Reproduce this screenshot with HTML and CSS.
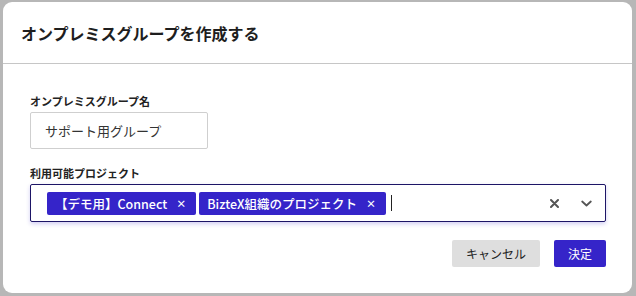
FILE: index.html
```html
<!DOCTYPE html>
<html lang="ja">
<head>
    <meta charset="UTF-8">
    <meta name="viewport" content="width=device-width, initial-scale=1.0">
    <title>オンプレミスグループを作成する</title>
    <link rel="stylesheet" href="styles.css">
</head>
<body>
    <div class="overlay">
        <div class="modal">
            <div class="modal-header">
                <h2>オンプレミスグループを作成する</h2>
            </div>
            <div class="modal-body">
                <div class="form-group">
                    <label for="group_name">オンプレミスグループ名</label>
                    <input type="text" id="group_name" class="text-input" value="サポート用グループ">
                </div>
                <div class="form-group">
                    <label>利用可能プロジェクト</label>
                    <div class="multi-select">
                        <div class="chips">
                            <span class="chip">【デモ用】Connect<span class="chip-remove">×</span></span>
                            <span class="chip">BizteX組織のプロジェクト<span class="chip-remove">×</span></span>
                            <span class="caret"></span>
                        </div>
                        <div class="indicators">
                            <svg class="icon" width="9" height="9" viewBox="0 0 9 9">
                                <path d="M1 1 L8 8 M8 1 L1 8" stroke="#555" stroke-width="2" stroke-linecap="round" fill="none"/>
                            </svg>
                            <svg class="icon" width="11" height="7" viewBox="0 0 11 7">
                                <path d="M1.2 1.5 L5.5 5.5 L9.8 1.5" stroke="#555" stroke-width="1.8" stroke-linecap="round" stroke-linejoin="round" fill="none"/>
                            </svg>
                        </div>
                    </div>
                </div>
                <div class="actions">
                    <button type="button" class="btn btn-cancel">キャンセル</button>
                    <button type="button" class="btn btn-primary">決定</button>
                </div>
            </div>
        </div>
    </div>
</body>
</html>
```

FILE: styles.css
```css
body {
    font-family: "Noto Sans CJK JP", "Noto Sans", sans-serif;
    background-color: #b7b7b7;
    margin: 0;
    color: #222;
}
.overlay {
    padding: 2px 4px 4px 3px;
}
.modal {
    width: 629px;
    background: #fff;
    border-radius: 9px;
}
.modal-header {
    height: 61px;
    display: flex;
    align-items: center;
    padding: 0 18px;
    border-bottom: 1px solid #c6c6c6;
}
.modal-header h2 {
    margin: 0;
    font-size: 16px;
    font-weight: bold;
    color: #1e1e1e;
    padding-top: 1px;
}
.modal-body {
    padding: 30px 26px 26px 27px;
}
.form-group {
    margin-bottom: 17px;
}
.form-group label {
    display: block;
    font-size: 11px;
    line-height: 14px;
    font-weight: bold;
    margin-bottom: 4px;
    color: #222;
}
.text-input {
    box-sizing: border-box;
    width: 178px;
    height: 37px;
    padding: 0 14px;
    border: 1px solid #cfcfcf;
    border-radius: 2px;
    font-family: inherit;
    font-size: 13px;
    color: #333;
    outline: none;
}
.multi-select {
    box-sizing: border-box;
    height: 38px;
    display: flex;
    align-items: center;
    border: 1px solid #1d1566;
    border-radius: 2px;
    padding: 0 13px 0 16px;
    box-shadow: 0 2px 4px rgba(53, 36, 201, 0.22);
}
.chips {
    flex: 1;
    display: flex;
    align-items: center;
    gap: 3px;
}
.chip {
    display: inline-flex;
    align-items: center;
    height: 23px;
    padding: 0 10px 0 8px;
    background: #3524c9;
    color: #fff;
    font-size: 12.5px;
    font-weight: 500;
    border-radius: 2px;
    white-space: nowrap;
}
.chip-remove {
    margin-left: 9px;
    font-size: 10px;
    font-weight: bold;
}
.caret {
    width: 1px;
    height: 16px;
    margin-left: 2px;
    background: #222;
}
.indicators {
    display: flex;
    align-items: center;
    gap: 22px;
}
.icon {
    display: block;
}
.actions {
    display: flex;
    justify-content: flex-end;
    gap: 14px;
    margin-top: 18px;
}
.btn {
    height: 27px;
    padding: 0 14px;
    border: none;
    border-radius: 2px;
    font-family: inherit;
    font-size: 12px;
    white-space: nowrap;
    cursor: pointer;
}
.btn-cancel {
    background: #dedede;
    color: #222;
}
.btn-primary {
    background: #3524c9;
    color: #fff;
}
```
